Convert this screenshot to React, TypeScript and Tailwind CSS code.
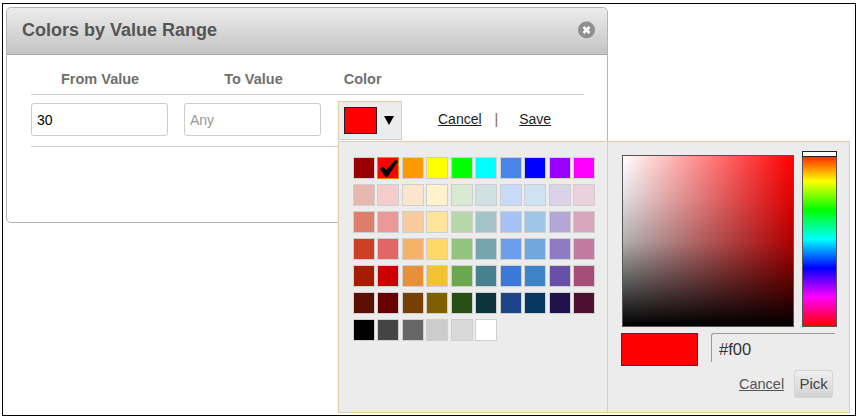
const PALETTE: string[][] = [
  ['#980000', '#ff0000', '#ff9900', '#ffff00', '#00ff00', '#00ffff', '#4a86e8', '#0000ff', '#9900ff', '#ff00ff'],
  ['#e6b8af', '#f4cccc', '#fce5cd', '#fff2cc', '#d9ead3', '#d0e0e3', '#c9daf8', '#cfe2f3', '#d9d2e9', '#ead1dc'],
  ['#dd7e6b', '#ea9999', '#f9cb9c', '#ffe599', '#b6d7a8', '#a2c4c9', '#a4c2f4', '#9fc5e8', '#b4a7d6', '#d5a6bd'],
  ['#cc4125', '#e06666', '#f6b26b', '#ffd966', '#93c47d', '#76a5af', '#6d9eeb', '#6fa8dc', '#8e7cc3', '#c27ba0'],
  ['#a61c00', '#cc0000', '#e69138', '#f1c232', '#6aa84f', '#45818e', '#3c78d8', '#3d85c6', '#674ea7', '#a64d79'],
  ['#5b0f00', '#660000', '#783f04', '#7f6000', '#274e13', '#0c343d', '#1c4587', '#073763', '#20124d', '#4c1130'],
  ['#000000', '#444444', '#666666', '#cccccc', '#d9d9d9', '#ffffff'],
];

const FONT = "font-['Liberation_Sans',Arial,sans-serif]";

// Close button in the dialog header
function CloseIcon() {
  return (
    <svg width="19" height="19" viewBox="0 0 19 19">
      <circle cx="9.5" cy="9.5" r="9.5" fill="#d8d8d8" />
      <circle cx="9.5" cy="9" r="8.5" fill="#8f8f8f" />
      <path d="M6.5 6l6 6M12.5 6l-6 6" stroke="#fff" strokeWidth="2.6" />
    </svg>
  );
}

// Tick on the selected swatch, thick at the base and tapering to the top right
function TickIcon() {
  return (
    <svg className="absolute left-[-1px] top-[-1px]" width="22" height="22" viewBox="0 0 22 22">
      <polygon points="3,12 6,9.5 9,13 18.5,3 21,4 10.5,20 8.5,20" fill="#000" />
    </svg>
  );
}

function Palette() {
  return (
    <div className="grid grid-cols-[repeat(10,22px)] gap-x-[2.45px] gap-y-[5px]">
      {PALETTE.flat().map((color, i) => {
        const selected = i === 1;
        return (
          <div
            key={`${color}-${i}`}
            className={`relative h-[22px] w-[22px] border ${selected ? 'border-[#e08a00]' : 'border-[#cfcfcf]'}`}
            style={{ backgroundColor: color }}
          >
            {selected && <TickIcon />}
          </div>
        );
      })}
    </div>
  );
}

function PickerPanel() {
  return (
    <div className="h-full flex-1 pl-[14px] pt-[9px]">
      <div className="flex items-start gap-[8px]">
        <div className="mt-[4px] h-[172px] w-[172px] border border-[#555] bg-[linear-gradient(to_bottom,rgba(0,0,0,0),rgba(0,0,0,0.13)_25%,rgba(0,0,0,0.31)_50%,rgba(0,0,0,0.65)_75%,#000),linear-gradient(to_right,#fff,#f00)]" />
        <div className="relative h-[176px] w-[35px] border border-[#555] bg-[linear-gradient(to_bottom,#f00,#ff0,#0f0,#0ff,#00f,#f0f,#f00)]">
          <div className="absolute left-[-1px] top-[-1px] h-[6px] w-[35px] border border-[#222] bg-white" />
        </div>
      </div>
      <div className="mt-[6px] flex items-start">
        <div className="ml-[-1px] h-[33px] w-[77px] border border-[#333] bg-[#ff0000]" />
        <div className="ml-[13px] h-[29px] w-[124px] rounded-tl-[3px] border-l border-t border-[#9a9a9a] pl-[7px] pt-[4px] text-[16.5px] leading-[22px] text-[#333]">
          #f00
        </div>
      </div>
      <div className="mt-[4px] flex items-center">
        <span className="ml-[117px] mt-[2px] text-[14.5px] text-[#555] underline">Cancel</span>
        <div className="ml-[10px] flex h-[28px] w-[39px] items-center justify-center rounded-[3px] border border-[#d4d4d4] bg-[linear-gradient(to_bottom,#efefef,#d2d2d2)] text-[15px] text-[#444]">
          Pick
        </div>
      </div>
    </div>
  );
}

export default function App() {
  return (
    <div className={`relative h-[417px] w-[857px] overflow-hidden bg-white pb-[1px] pl-[2px] pr-[1px] pt-[3px] ${FONT}`}>
      <div className="h-full border border-black pl-[3px] pt-[3px]">
        {/* dialog */}
        <div className="h-[216px] w-[602px] rounded-[5px] border border-[#b4b4b4]">
          <div className="flex h-[47px] items-center justify-between rounded-t-[5px] border-b border-[#a8a8a8] bg-[linear-gradient(to_bottom,#ececec,#c3c3c3)] pb-[2px] pl-[15px] pr-[11px]">
            <span className="text-[18px] font-bold text-[#555]">Colors by Value Range</span>
            <CloseIcon />
          </div>
          <div className="ml-[24px] w-[553px]">
            <div className="flex h-[40px] items-center border-b border-[#cfcfcf] pt-[11px] text-[14.5px] font-bold text-[#707070]">
              <span className="ml-[30px]">From Value</span>
              <span className="ml-[85px]">To Value</span>
              <span className="ml-[61px]">Color</span>
            </div>
            <div className="flex h-[52px] items-start border-b border-[#cfcfcf]">
              <div className="mt-[8px] flex h-[33px] w-[137px] items-center rounded-[3px] border border-[#ccc] pl-[5px] pt-[2px] text-[14px] text-black">
                30
              </div>
              <div className="ml-[16px] mt-[8px] flex h-[33px] w-[137px] items-center rounded-[3px] border border-[#ccc] pl-[5px] pt-[2px] text-[14px] text-[#999]">
                Any
              </div>
              <div className="ml-[17px] mt-[6px] flex h-[39px] w-[64px] items-center border border-[#f0c8a0] bg-[#ececec] pl-[5px]">
                <div className="h-[27px] w-[33px] border border-[#222] bg-[#ff0000]" />
                <div className="ml-[7px] h-0 w-0 border-x-[5px] border-t-[9px] border-x-transparent border-t-black" />
              </div>
              <div className="mt-[14px] flex items-center text-[14px] text-[#222]">
                <span className="ml-[36px] underline">Cancel</span>
                <span className="ml-[13px] text-[#8a5a3a]">|</span>
                <span className="ml-[21px] underline">Save</span>
              </div>
            </div>
          </div>
        </div>
      </div>

      {/* colour popup, opened from the swatch button */}
      <div className="absolute left-[338px] top-[141px] flex h-[272px] w-[512px] border border-[#f0c8a0] bg-[#ececec]">
        <div className="h-full w-[269px] border-r border-[#cfcfcf] pl-[14px] pt-[15px]">
          <Palette />
        </div>
        <PickerPanel />
      </div>
    </div>
  );
}
